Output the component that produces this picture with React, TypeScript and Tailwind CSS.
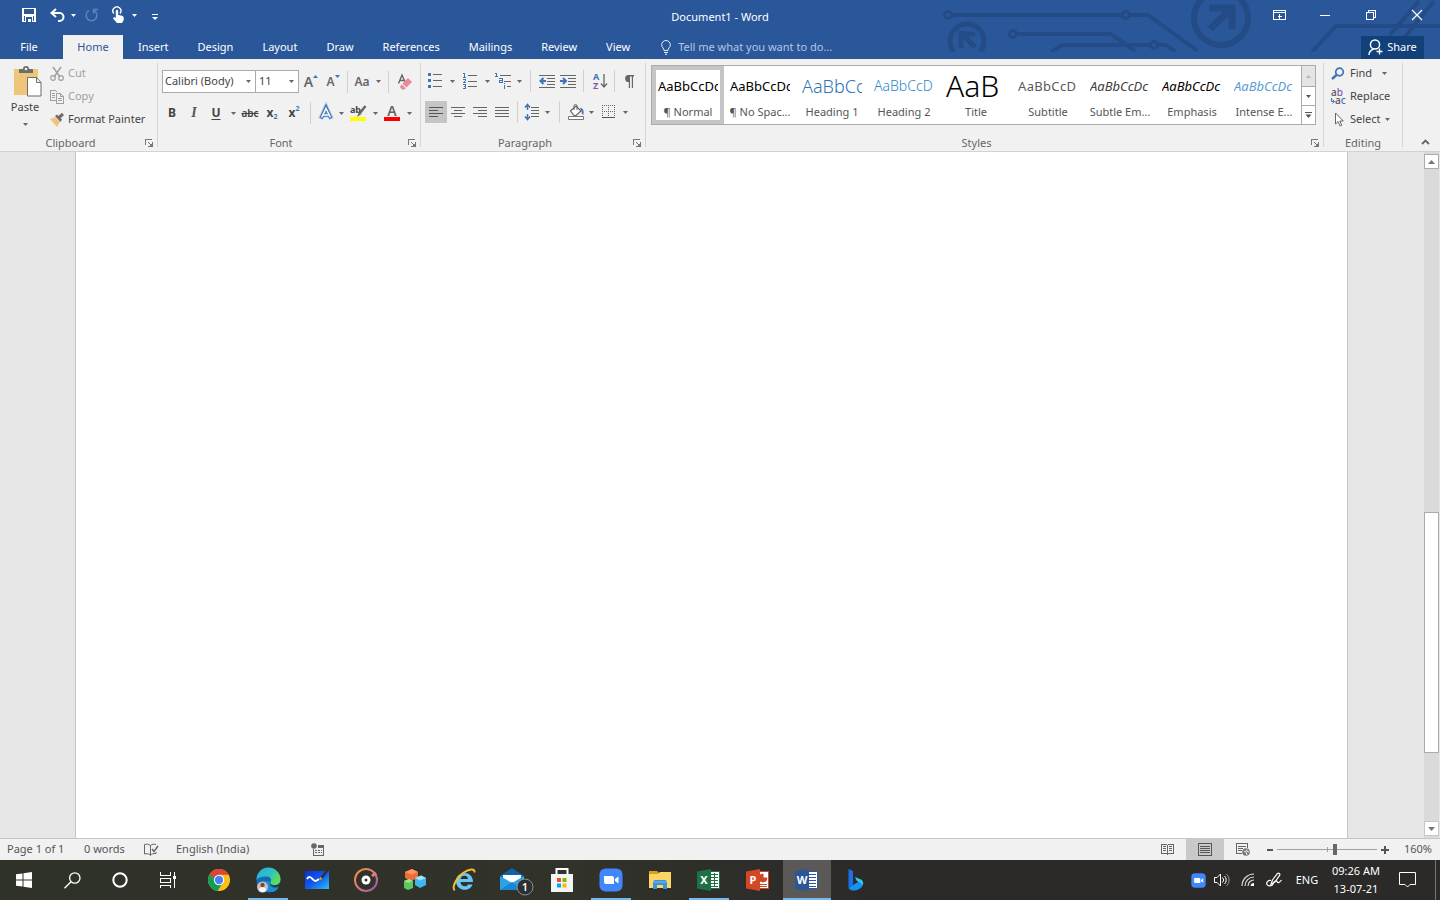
import type { FC, ReactNode } from "react";
import clsx from "clsx";

type IconProps = { w?: number; h?: number; crisp?: boolean; className?: string; children: ReactNode };

const Icon: FC<IconProps> = ({ w = 16, h = 16, crisp, className, children }) => (
  <svg
    width={w}
    height={h}
    viewBox={`0 0 ${w} ${h}`}
    fill="none"
    shapeRendering={crisp ? "crispEdges" : undefined}
    className={clsx("shrink-0 overflow-visible", className)}
    aria-hidden="true"
  >
    {children}
  </svg>
);

const Caret = () => (
  <Icon w={5} h={3}>
    <path d="M0 0h5L2.5 3z" fill="currentColor" />
  </Icon>
);

const Tool: FC<{ label: string; className?: string; children: ReactNode }> = ({ label, className, children }) => (
  <button
    type="button"
    aria-label={label}
    className={clsx("flex h-[22px] shrink-0 items-center justify-center text-[#666]", className ?? "w-[22px]")}
  >
    {children}
  </button>
);

const Sep: FC<{ className?: string }> = ({ className }) => (
  <span className={clsx("h-[22px] w-px shrink-0 bg-[#d0d0d0]", className)} />
);

const Group: FC<{ name: string; className: string; launcher?: boolean; children: ReactNode }> = ({
  name,
  className,
  launcher = true,
  children,
}) => (
  <section aria-label={name} className={clsx("flex flex-col", className)}>
    <div className="h-[76px]">{children}</div>
    <div className="flex h-4 items-center text-[#666]">
      <span className="flex-1 text-center">{name}</span>
      {launcher && (
        <button type="button" aria-label={`${name} settings`} className="flex w-4 justify-center">
          <Icon w={8} h={8} crisp>
            <path d="M0.5 6V0.5H7M3 3l3 3M7.5 3v4.5H3" stroke="#777" />
            <path d="M7 4v3H4z" fill="#777" />
          </Icon>
        </button>
      )}
    </div>
  </section>
);

const Divider = () => <span className="mt-1 h-[84px] w-px shrink-0 bg-[#d4d4d4]" />;

const tabs = ["Insert", "Design", "Layout", "Draw", "References", "Mailings", "Review", "View"];

const styleItems = [
  { name: "¶ Normal", sample: "AaBbCcDc", look: "text-[13px] text-black" },
  { name: "¶ No Spac...", sample: "AaBbCcDc", look: "text-[13px] text-black" },
  { name: "Heading 1", sample: "AaBbCc", look: "text-lg font-light text-[#2e74b5]" },
  { name: "Heading 2", sample: "AaBbCcD", look: "text-sm font-light text-[#2e86c8]" },
  { name: "Title", sample: "AaB", look: "text-[30px] font-light text-black" },
  { name: "Subtitle", sample: "AaBbCcD", look: "text-[13px] tracking-wide text-[#5a5a5a]" },
  { name: "Subtle Em...", sample: "AaBbCcDc", look: "text-[13px] italic text-[#404040]" },
  { name: "Emphasis", sample: "AaBbCcDc", look: "text-[13px] italic text-black" },
  { name: "Intense E...", sample: "AaBbCcDc", look: "text-[13px] italic text-[#5b9bd5]" },
];

const Circuit = () => (
  <svg
    width="500"
    height="52"
    viewBox="0 0 500 52"
    fill="none"
    stroke="#234c87"
    strokeWidth="4"
    className="absolute top-0 right-0"
    aria-hidden="true"
  >
    <circle cx="8" cy="15" r="3.5" strokeWidth="3" />
    <path d="M12 15h170M190 15h18l50 36" />
    <circle cx="186" cy="15" r="3.5" strokeWidth="3" />
    <circle cx="73" cy="34" r="3.5" strokeWidth="3" />
    <path d="M77 34h94l24 17M111 52l11-7h88M218 45h8l10 7" />
    <circle cx="214" cy="45" r="3.5" strokeWidth="3" />
    <path d="M14 52a17 17 0 1 1 26 0" strokeWidth="5" />
    <path d="M19 34h16M21 31v17M22 34l13 13" strokeWidth="5" />
    <circle cx="281" cy="18" r="27" strokeWidth="6" />
    <path d="M269 8h26M292 5v24M292 8l-22 21" strokeWidth="7" />
    <path d="M372 52l24-26h104M450 35l29-34M464 38l30-37" />
  </svg>
);

const TitleBar = () => (
  <div className="relative grid h-[35px] grid-cols-[1fr_auto_1fr] text-white">
    <div className="flex h-[30px] items-center pl-[18px]">
      <button type="button" aria-label="Save" className="flex w-[22px] justify-center">
        <Icon w={14} h={14} crisp>
          <path d="M0 0h14v14H0z" fill="#fff" />
          <path d="M2 1h10v5H2zM2 8h10v5H2z" fill="#2a579a" />
          <path d="M3 8h8v6H3z" fill="#fff" />
          <path d="M4 9h6v5H9v-3H6v3H4z" fill="#2a579a" />
        </Icon>
      </button>
      <button type="button" aria-label="Undo" className="flex w-[31px] items-center justify-center pl-1">
        <Icon w={15} h={14}>
          <path d="M6 1L1.500 5l4.500 4M2 5h7.500a3.700 3.700 0 0 1 0 8H8" stroke="#fff" strokeWidth="2" />
        </Icon>
      </button>
      <Caret />
      <button type="button" aria-label="Repeat" className="flex w-8 justify-center">
        <Icon w={14} h={14}>
          <path d="M9 2.500A5.400 5.400 0 1 1 4 2.500M8.500 5.500V1.500H13" stroke="#5b82bb" strokeWidth="1.500" />
        </Icon>
      </button>
      <button type="button" aria-label="Touch mode" className="flex w-5 justify-center">
        <Icon w={12} h={16}>
          <path d="M1.800 6.500A4 4 0 1 1 8 6.500" stroke="#fff" strokeWidth="1.400" />
          <path d="M3.800 4a1.200 1.200 0 0 1 2.400 0v4l4 .8 1.500 1.200v3L10 16H5L1 11.500 2 10l1.800 1z" fill="#fff" />
        </Icon>
      </button>
      <span className="flex w-3 justify-center">
        <Caret />
      </span>
      <button type="button" aria-label="Customize toolbar" className="mt-1 flex w-[30px] justify-center">
        <Icon w={6} h={6}>
          <path d="M0 .5h6" stroke="#fff" />
          <path d="M0 3h6L3 6z" fill="#fff" />
        </Icon>
      </button>
    </div>
    <h1 className="self-center">Document1 - Word</h1>
    <div className="flex h-[30px] items-center justify-end">
      <button type="button" aria-label="Ribbon display options" className="flex w-[46px] justify-center">
        <Icon w={13} h={10} crisp>
          <path d="M.5 .5h12v9H.5zM0 2.500h13M6.500 4v5M4.500 6h4" stroke="#fff" />
        </Icon>
      </button>
      <button type="button" aria-label="Minimize" className="flex w-[46px] justify-center">
        <Icon w={10} h={10} crisp>
          <path d="M0 5.500h10" stroke="#fff" />
        </Icon>
      </button>
      <button type="button" aria-label="Restore" className="flex w-[46px] justify-center">
        <Icon w={10} h={10} crisp>
          <path d="M.5 2.500h7v7h-7zM2.500 2V.5h7v7H8" stroke="#fff" />
        </Icon>
      </button>
      <button type="button" aria-label="Close" className="flex w-[46px] justify-center">
        <Icon w={10} h={10}>
          <path d="M0 0l10 10M10 0L0 10" stroke="#fff" strokeWidth="1.200" />
        </Icon>
      </button>
    </div>
  </div>
);

const TabRow = () => (
  <nav className="relative flex h-6 items-center text-white">
    <a href="#file" className="w-[58px] text-center">
      File
    </a>
    <a href="#home" className="ml-[5px] flex h-6 w-[60px] items-center justify-center bg-[#f1f1f1] text-[#2a579a]">
      Home
    </a>
    <div className="flex gap-[29px] pr-[31px] pl-[15px]">
      {tabs.map((tab) => (
        <a key={tab} href={`#${tab.toLowerCase()}`}>
          {tab}
        </a>
      ))}
    </div>
    <label className="flex flex-1 items-center gap-[7px]">
      <Icon w={10} h={15}>
        <path d="M3 10.500C3 8 .7 7.500.7 4.800a4.300 4.300 0 0 1 8.600 0C9.300 7.500 7 8 7 10.500zM3 12.500h4M4 14.300h2" stroke="#e8eef7" />
      </Icon>
      <input
        aria-label="Tell me"
        placeholder="Tell me what you want to do..."
        className="w-[200px] bg-transparent outline-none placeholder:text-[#b4c6e2]"
      />
    </label>
    <button type="button" className="mr-4 flex h-[23px] w-[63px] items-center justify-center gap-1 bg-[#124078]">
      <Icon w={15} h={16}>
        <circle cx="7" cy="5.500" r="4.600" stroke="#fff" strokeWidth="1.500" />
        <path d="M1 16c0-3.500 2-5 4.500-6M11.500 9.500v6M8.500 12.500h6" stroke="#fff" strokeWidth="1.400" />
      </Icon>
      Share
    </button>
  </nav>
);

const ClipboardGroup = () => (
  <Group name="Clipboard" className="w-[157px]">
    <div className="flex pt-[3px]">
      <button type="button" className="flex w-[50px] flex-col items-center pt-[3px]">
        <Icon w={30} h={32} className="ml-1">
          <path d="M2 4h24v26H2z" fill="#eec57a" />
          <path d="M7 8V4h4a3 3 0 0 1 6 0h4v4z" fill="#6d6d6d" />
          <circle cx="14" cy="4" r="1.300" fill="#f1f1f1" />
          <path d="M15.500 12.500h9l4.500 5V31H15.500z" fill="#fff" stroke="#6d6d6d" />
          <path d="M24.500 12.500v5H29" stroke="#6d6d6d" />
        </Icon>
        <span className="mt-0.5 leading-4">Paste</span>
        <span className="mt-2 text-[#666]">
          <Caret />
        </span>
      </button>
      <div className="flex flex-col">
        <button type="button" disabled className="flex h-[23px] items-center gap-1 text-[#a0a0a0]">
          <Icon w={14} h={14}>
            <path d="M3 0l7 10M11 0L4 10" stroke="#a0a0a0" strokeWidth="1.500" />
            <circle cx="3" cy="11" r="2.300" stroke="#a0a0a0" strokeWidth="1.200" />
            <circle cx="11" cy="11" r="2.300" stroke="#a0a0a0" strokeWidth="1.200" />
          </Icon>
          Cut
        </button>
        <button type="button" disabled className="flex h-[23px] items-center gap-1 text-[#a0a0a0]">
          <Icon w={14} h={14} crisp>
            <path d="M6 10.500H.5V.5h5l2 2M2 3.500h3M2 5.500h3M2 7.500h3" stroke="#a0a0a0" />
            <path d="M6.500 3.500h4l3 3v7h-7zM10.500 3.500v3h3M8 8.500h4M8 10.500h4" stroke="#a0a0a0" />
          </Icon>
          Copy
        </button>
        <button type="button" className="flex h-[23px] items-center gap-1">
          <Icon w={14} h={14}>
            <path d="M0 6l5-2 5 5-3 5z" fill="#eec57a" />
            <path d="M5 3l2-1.500 5 5L10.500 9z" fill="#6d6d6d" />
            <path d="M9 4.500L13 1" stroke="#6d6d6d" strokeWidth="3" />
          </Icon>
          Format Painter
        </button>
      </div>
    </div>
  </Group>
);

const FontGroup = () => (
  <Group name="Font" className="w-[262px]">
    <div className="flex flex-col gap-[9px] pt-[11px] pl-[3px]">
      <div className="flex items-center">
        <label className="relative ml-px flex items-center text-[#666]">
          <select
            aria-label="Font"
            className="h-[23px] w-[94px] appearance-none border border-[#ababab] bg-white pl-0.5 text-[#444]"
          >
            <option>Calibri (Body)</option>
          </select>
          <span className="pointer-events-none absolute right-[5px]">
            <Caret />
          </span>
        </label>
        <label className="relative -ml-px flex items-center text-[#666]">
          <select
            aria-label="Font size"
            className="h-[23px] w-11 appearance-none border border-[#ababab] bg-white pl-[3px] text-[#444]"
          >
            <option>11</option>
          </select>
          <span className="pointer-events-none absolute right-[5px]">
            <Caret />
          </span>
        </label>
        <Tool label="Grow font" className="ml-px w-[22px]">
          <span className="text-sm font-semibold">A</span>
          <Icon w={5} h={14}>
            <path d="M0 3l2.500-3L5 3z" fill="#3f74b5" />
          </Icon>
        </Tool>
        <Tool label="Shrink font">
          <span className="text-xs font-semibold">A</span>
          <Icon w={5} h={14}>
            <path d="M0 0h5L2.500 3z" fill="#3f74b5" />
          </Icon>
        </Tool>
        <Sep className="mx-[3px]" />
        <Tool label="Change case">
          <span className="text-xs font-semibold">Aa</span>
        </Tool>
        <Tool label="Change case options" className="w-[10px]">
          <Caret />
        </Tool>
        <Sep className="mx-[5px]" />
        <Tool label="Clear formatting">
          <Icon w={16} h={16}>
            <path d="M1.500 9.500L5 1l3.500 8M3 6.500h4.500" stroke="#666" strokeWidth="1.400" />
            <path d="M11 4l4 4-5.500 5.500-4-4z" fill="#e88a99" />
            <path d="M4.800 10.200l4 4L7.500 15.500H5L2.800 13z" fill="#e88a99" />
          </Icon>
        </Tool>
      </div>
      <div className="flex items-center">
        <Tool label="Bold">
          <b className="text-xs text-[#444]">B</b>
        </Tool>
        <Tool label="Italic">
          <i className="font-['Liberation_Serif',serif] text-sm font-bold text-[#555]">I</i>
        </Tool>
        <Tool label="Underline">
          <span className="text-xs font-bold text-[#444] underline underline-offset-2">U</span>
        </Tool>
        <Tool label="Underline options" className="w-3">
          <Caret />
        </Tool>
        <Tool label="Strikethrough">
          <span className="text-[10px] font-semibold text-[#444] line-through">abc</span>
        </Tool>
        <Tool label="Subscript">
          <b className="text-xs text-[#444]">x</b>
          <span className="mt-2 text-[7px] font-bold text-[#3f74b5]">2</span>
        </Tool>
        <Tool label="Superscript">
          <b className="text-xs text-[#444]">x</b>
          <span className="mb-2 text-[7px] font-bold text-[#3f74b5]">2</span>
        </Tool>
        <Sep className="mx-[5px]" />
        <Tool label="Text effects" className="w-5">
          <Icon w={16} h={16}>
            <path d="M2.500 14L8 2l5.500 12M5 10h6" stroke="#9dbde0" strokeWidth="5" strokeOpacity=".5" />
            <path d="M3 13.500L8 2.500l5 11M5 10h6" stroke="#3f74b5" strokeWidth="3.600" />
            <path d="M3.500 12.500L8 3.500l4.500 9M5 10h6" stroke="#fff" strokeWidth="1.500" />
          </Icon>
        </Tool>
        <Tool label="Text effects options" className="w-[10px]">
          <Caret />
        </Tool>
        <Tool label="Highlight" className="w-6">
          <span className="flex flex-col items-center">
            <span className="flex h-3 items-start">
              <span className="text-[9px] leading-[10px] font-bold text-[#444]">ab</span>
              <Icon w={9} h={12} className="-ml-1">
                <path d="M8.500 1L3 8" stroke="#666" strokeWidth="2.500" />
                <path d="M2 7l2.500 2L0 12z" fill="#666" />
              </Icon>
            </span>
            <span className="h-1 w-4 bg-[#ffff00]" />
          </span>
        </Tool>
        <Tool label="Highlight options" className="w-[10px]">
          <Caret />
        </Tool>
        <Tool label="Font color" className="w-6">
          <span className="flex flex-col items-center">
            <span className="h-3 text-sm leading-3 font-semibold">A</span>
            <span className="h-1 w-4 bg-[#ff0000]" />
          </span>
        </Tool>
        <Tool label="Font color options" className="w-[10px]">
          <Caret />
        </Tool>
      </div>
    </div>
  </Group>
);

const ParagraphGroup = () => (
  <Group name="Paragraph" className="w-[224px]">
    <div className="flex flex-col gap-[9px] pt-[11px] pl-[3px]">
      <div className="flex items-center">
        <Tool label="Bullets">
          <Icon w={14} h={16} crisp>
            <path d="M0 0h3v3H0zM0 6h3v3H0zM0 12h3v3H0z" fill="#3f74b5" />
            <path d="M5 1.500h9M5 7.500h9M5 13.500h9" stroke="#666" />
          </Icon>
        </Tool>
        <Tool label="Bullet options" className="w-3">
          <Caret />
        </Tool>
        <Tool label="Numbering" className="w-6">
          <Icon w={14} h={16} crisp>
            <path d="M0 .5h1.500V4M0 4.500h3M0 6.500h2.500v1L.5 9.500H3M0 11.500h2.500v4H0M1 13.500h1" stroke="#3f74b5" />
            <path d="M5 2.500h9M5 8.500h9M5 13.500h9" stroke="#666" />
          </Icon>
        </Tool>
        <Tool label="Numbering options" className="w-[10px]">
          <Caret />
        </Tool>
        <Tool label="Multilevel list">
          <Icon w={16} h={16} crisp>
            <path d="M0 .5h1.500V3M0 3.500h3M4 5.500h3v4M7 7.500H4.500v2H7M9.500 12v4M9.500 10v1" stroke="#3f74b5" />
            <path d="M5 2.500h11M9 8.500h7M12 13.500h4" stroke="#666" />
          </Icon>
        </Tool>
        <Tool label="Multilevel options" className="w-[10px]">
          <Caret />
        </Tool>
        <Sep className="mx-[6px]" />
        <Tool label="Decrease indent" className="w-5">
          <Icon w={16} h={14}>
            <path d="M0 1.500h16M8 4.500h8M8 7.500h8M8 10.500h8M0 13.500h16" stroke="#666" shapeRendering="crispEdges" />
            <path d="M7 7H2M4.500 4L1.500 7l3 3" stroke="#3f74b5" strokeWidth="2" />
          </Icon>
        </Tool>
        <Tool label="Increase indent">
          <Icon w={16} h={14}>
            <path d="M0 1.500h16M8 4.500h8M8 7.500h8M8 10.500h8M0 13.500h16" stroke="#666" shapeRendering="crispEdges" />
            <path d="M0 7h5M3 4l3 3-3 3" stroke="#3f74b5" strokeWidth="2" />
          </Icon>
        </Tool>
        <Sep className="mx-1" />
        <Tool label="Sort" className="w-6">
          <Icon w={15} h={16}>
            <text x="0" y="7" fontSize="9" fontWeight="700" fill="#3f74b5">
              A
            </text>
            <text x="0" y="16" fontSize="9" fontWeight="700" fill="#8659a8">
              Z
            </text>
            <path d="M11 1v13M8 10.500l3 3.500 3-3.500" stroke="#666" strokeWidth="1.300" />
          </Icon>
        </Tool>
        <Sep className="mx-[2px]" />
        <Tool label="Show paragraph marks" className="w-6">
          <Icon w={10} h={13}>
            <path d="M4.500 0H10v1.500H9V13H7.800V1.500H6V13H4.800V7A3.500 3.500 0 0 1 4.500 0z" fill="#666" />
          </Icon>
        </Tool>
      </div>
      <div className="flex items-center pl-px">
        <Tool label="Align left" className="w-[22px] bg-[#c5c5c5]">
          <Icon w={14} h={12} crisp>
            <path d="M0 1.500h14M0 4.500h9M0 7.500h14M0 10.500h9" stroke="#555" />
          </Icon>
        </Tool>
        <Tool label="Center">
          <Icon w={14} h={12} crisp>
            <path d="M0 1.500h14M3 4.500h8M0 7.500h14M3 10.500h8" stroke="#666" />
          </Icon>
        </Tool>
        <Tool label="Align right">
          <Icon w={14} h={12} crisp>
            <path d="M0 1.500h14M5 4.500h9M0 7.500h14M5 10.500h9" stroke="#666" />
          </Icon>
        </Tool>
        <Tool label="Justify">
          <Icon w={14} h={12} crisp>
            <path d="M0 1.500h14M0 4.500h14M0 7.500h14M0 10.500h14" stroke="#666" />
          </Icon>
        </Tool>
        <Sep className="mx-1" />
        <Tool label="Line spacing" className="w-5">
          <Icon w={14} h={16}>
            <path d="M6 3.500h8M6 6.500h8M6 9.500h8M6 12.500h8" stroke="#666" shapeRendering="crispEdges" />
            <path d="M2.500 1v5M2.500 10v5M0 3.500l2.500-3 2.500 3M0 12.500l2.500 3 2.500-3" stroke="#3f74b5" strokeWidth="1.500" />
          </Icon>
        </Tool>
        <Tool label="Line spacing options" className="w-[10px]">
          <Caret />
        </Tool>
        <Sep className="mx-[7px]" />
        <Tool label="Shading" className="w-[18px]">
          <Icon w={17} h={16}>
            <path d="M.5 12.500h15v3H.5z" fill="#fff" stroke="#777" />
            <path d="M2.500 7L8 2l5 5-5 4.500H6z" fill="#fff" stroke="#666" strokeWidth="1.200" />
            <path d="M6 6V2a1.500 1.500 0 0 1 3 0v4" stroke="#666" />
            <path d="M12 4c3 0 4 2 3.500 7-1.500-1-2-2-2-4z" fill="#3f74b5" />
          </Icon>
        </Tool>
        <Tool label="Shading options" className="w-3">
          <Caret />
        </Tool>
        <Tool label="Borders">
          <Icon w={13} h={14} crisp>
            <path d="M0 .5h13M0 6.500h13M.5 0v13M6.500 0v13M12.500 0v13" stroke="#666" strokeDasharray="1 1" />
            <path d="M0 12.500h13" stroke="#555" />
          </Icon>
        </Tool>
        <Tool label="Border options" className="w-3">
          <Caret />
        </Tool>
      </div>
    </div>
  </Group>
);

const StylesGroup = () => (
  <Group name="Styles" className="min-w-0 flex-1">
    <div className="pt-[6px] pr-[7px] pl-[5px]">
      <div className="flex h-[60px] border border-[#ababab] bg-white">
        <div className="flex min-w-0 flex-1 overflow-hidden">
          {styleItems.map((item, index) => (
            <button
              key={item.name}
              type="button"
              className={clsx(
                "flex w-[72px] shrink-0 flex-col items-center border-4 pt-1",
                index === 0 ? "border-[#c5c5c5]" : "border-transparent",
              )}
            >
              <span className="flex h-6 w-[60px] items-center overflow-hidden">
                <span className={clsx("leading-6 whitespace-nowrap", item.look)}>{item.sample}</span>
              </span>
              <span className="mt-1.5 leading-4 whitespace-nowrap text-[#555]">{item.name}</span>
            </button>
          ))}
        </div>
        <div className="flex w-[14px] flex-col border-l border-[#ababab] text-[#555]">
          <button
            type="button"
            aria-label="Previous styles"
            className="flex h-5 items-center justify-center bg-[#e4e4e4] text-[#b5b5b5]"
          >
            <Icon w={5} h={3}>
              <path d="M0 3l2.500-3L5 3z" fill="currentColor" />
            </Icon>
          </button>
          <button
            type="button"
            aria-label="Next styles"
            className="flex flex-1 items-center justify-center border-y border-[#ababab]"
          >
            <Caret />
          </button>
          <button type="button" aria-label="More styles" className="flex flex-1 items-center justify-center">
            <Icon w={7} h={6}>
              <path d="M0 .5h7" stroke="#555" />
              <path d="M.5 2.500h6l-3 3.500z" fill="#555" />
            </Icon>
          </button>
        </div>
      </div>
    </div>
  </Group>
);

const EditingGroup = () => (
  <Group name="Editing" className="w-[78px]" launcher={false}>
    <div className="flex flex-col items-start pt-[3px] pl-[6px]">
      <button type="button" className="flex h-[23px] items-center gap-1">
        <Icon w={16} h={14}>
          <circle cx="9.500" cy="5" r="3.800" stroke="#3f74b5" strokeWidth="1.700" />
          <path d="M6.500 8L2 12" stroke="#3f74b5" strokeWidth="2.500" />
        </Icon>
        Find
        <span className="ml-1.5 text-[#666]">
          <Caret />
        </span>
      </button>
      <button type="button" className="flex h-[23px] items-center gap-1">
        <Icon w={16} h={16}>
          <text x="1" y="7" fontSize="10" fontWeight="500" fill="#555">
            a<tspan fill="#8659a8">b</tspan>
          </text>
          <text x="5" y="15" fontSize="10" fontWeight="500" fill="#555">
            a<tspan fill="#3f74b5">c</tspan>
          </text>
          <path d="M1.500 9v3.500H4M2.500 10.500l2 2-2 2" stroke="#3f74b5" />
        </Icon>
        Replace
      </button>
      <button type="button" className="flex h-[23px] items-center gap-1">
        <Icon w={16} h={16}>
          <path d="M5.500 1v11l2.600-2.500 2 4.500 1.700-.8-2-4.200h3.500z" fill="#fff" stroke="#666" />
        </Icon>
        Select
        <span className="text-[#666]">
          <Caret />
        </span>
      </button>
    </div>
  </Group>
);

const Ribbon = () => (
  <div className="flex h-[93px] border-b border-[#d2d2d2] bg-[#f1f1f1] text-[#444]">
    <ClipboardGroup />
    <Divider />
    <FontGroup />
    <Divider />
    <ParagraphGroup />
    <Divider />
    <StylesGroup />
    <Divider />
    <EditingGroup />
    <Divider />
    <div className="flex w-[37px] items-end justify-center pb-[6px] pl-2">
      <button type="button" aria-label="Collapse ribbon">
        <Icon w={9} h={6}>
          <path d="M1 5l3.500-3.500L8 5" stroke="#666" strokeWidth="1.800" />
        </Icon>
      </button>
    </div>
  </div>
);

const Workspace = () => (
  <main className="flex min-h-0 flex-1 bg-[#e6e6e6]">
    <div className="mr-[76px] ml-[75px] flex-1 border-x border-[#c6c6c6] bg-white" />
    <div className="mr-px flex w-[15px] flex-col bg-[#dadada] py-0.5 text-[#777]">
      <button
        type="button"
        aria-label="Scroll up"
        className="flex h-[15px] items-center justify-center border border-[#ababab] bg-white"
      >
        <Icon w={7} h={4}>
          <path d="M0 4l3.500-4L7 4z" fill="currentColor" />
        </Icon>
      </button>
      <div className="flex-[344]" />
      <div className="flex-[240] border border-[#ababab] bg-white" />
      <div className="flex-[68]" />
      <button
        type="button"
        aria-label="Scroll down"
        className="flex h-[15px] items-center justify-center border border-[#c6c6c6] bg-white"
      >
        <Icon w={7} h={4}>
          <path d="M0 0h7L3.500 4z" fill="currentColor" />
        </Icon>
      </button>
    </div>
  </main>
);

const StatusBar = () => (
  <div className="flex h-[22px] items-center border-t border-[#c6c6c6] bg-[#f1f1f1] text-[#555]">
    <span className="w-[84px] pl-[7px]">Page 1 of 1</span>
    <span className="w-[59px]">0 words</span>
    <button type="button" aria-label="Proofing" className="w-[33px]">
      <Icon w={16} h={14}>
        <path d="M7.500 2.500C5.500 1 3 1 1.500 1.500v9.500c2-.5 4-.5 6 1 1-1 2.500-1.500 5.500-1.500V9M7.500 2v10.500M7.500 2.500C9 1 11 1 13 1.500" stroke="#666" />
        <path d="M9 6l2 2.500L15 3" stroke="#666" strokeWidth="1.400" />
      </Icon>
    </button>
    <span className="w-[135px]">English (India)</span>
    <button type="button" aria-label="Record macro">
      <Icon w={14} h={14} crisp>
        <path d="M2.500 6v6.500h10v-10H7" stroke="#666" />
        <path d="M7 2h6v3H7z" fill="#666" />
        <path d="M4 7.500h7M4 9.500h7" stroke="#666" strokeDasharray="2 1" />
        <circle cx="3" cy="3" r="2.800" fill="#666" shapeRendering="auto" />
      </Icon>
    </button>
    <div className="ml-auto flex items-center">
      <button type="button" aria-label="Read mode" className="flex h-[21px] w-[38px] items-center justify-center">
        <Icon w={13} h={13} crisp>
          <path d="M.5 1.500h5l1 1 1-1h5v9h-5l-1 1-1-1h-5zM6.500 2v10M2 3.500h3M2 5.500h3M2 7.500h3M8 3.500h3M8 5.500h3M8 7.500h3" stroke="#666" />
        </Icon>
      </button>
      <button
        type="button"
        aria-label="Print layout"
        className="flex h-[21px] w-[38px] items-center justify-center bg-[#c9c9c9]"
      >
        <Icon w={14} h={13} crisp>
          <path d="M.5 .5h13v12H.5zM2 3.500h10M2 5.500h10M2 7.500h10M2 9.500h10" stroke="#555" />
        </Icon>
      </button>
      <button type="button" aria-label="Web layout" className="flex h-[21px] w-[38px] items-center justify-center">
        <Icon w={14} h={13}>
          <path d="M6 10.500H.5V.5h11V5M2 3.500h8M2 5.500h5M2 7.500h4" stroke="#666" shapeRendering="crispEdges" />
          <circle cx="10" cy="9" r="3.800" fill="#777" />
          <path d="M8 8l2 1 1 3M11 6.500l-.5 1.500L13 9" stroke="#f1f1f1" />
        </Icon>
      </button>
      <button type="button" aria-label="Zoom out" className="flex w-[15px] justify-center">
        <Icon w={6} h={8} crisp>
          <path d="M0 4h6" stroke="#555" strokeWidth="2" />
        </Icon>
      </button>
      <span className="relative flex items-center">
        <span className="absolute left-[50px] h-[5px] w-px bg-[#a0a0a0]" />
        <input
          type="range"
          aria-label="Zoom"
          defaultValue={58}
          className="relative h-[11px] w-[100px] appearance-none bg-[linear-gradient(#a0a0a0,#a0a0a0)] bg-[length:100%_1px] bg-center bg-no-repeat [&::-webkit-slider-thumb]:h-[11px] [&::-webkit-slider-thumb]:w-1 [&::-webkit-slider-thumb]:appearance-none [&::-webkit-slider-thumb]:bg-[#666]"
        />
      </span>
      <button type="button" aria-label="Zoom in" className="flex w-4 justify-center">
        <Icon w={8} h={8} crisp>
          <path d="M0 4h8M4 0v8" stroke="#555" strokeWidth="2" />
        </Icon>
      </button>
      <span className="w-[47px] pr-2 text-right">160%</span>
    </div>
  </div>
);

const ZoomGlyph: FC<{ size: number }> = ({ size }) => (
  <svg width={size} height={size} viewBox="0 0 24 24" aria-hidden="true">
    <rect x=".5" y=".5" width="23" height="23" rx="6" fill="#4087fc" />
    <path d="M5 8h8a2 2 0 0 1 2 2v6H7a2 2 0 0 1-2-2zM16 11l3.500-2.500v7L16 13z" fill="#fff" />
  </svg>
);

// Shared base of the three Office taskbar icons
const OfficeGlyph: FC<{ color: string; letter: string; children: ReactNode }> = ({ color, letter, children }) => (
  <Icon w={24} h={22}>
    <path d="M12 2.500h10.500v17H12z" fill="#fff" stroke={color} />
    {children}
    <path d="M0 2.500L14 0v22L0 19.500z" fill={color} />
    <text x="7" y="15" textAnchor="middle" fontSize="11" fontWeight="700" fill="#fff">
      {letter}
    </text>
  </Icon>
);

const apps: { name: string; state?: "open" | "active"; icon: ReactNode }[] = [
  {
    name: "Chrome",
    icon: (
      <Icon w={24} h={24}>
        <circle cx="12" cy="12" r="11" fill="#fbc117" />
        <path d="M12 12L2.500 6.500A11 11 0 0 1 21.500 6.500H12z" fill="#db4437" />
        <path d="M2.500 6.500a11 11 0 0 0 8 16.400L16 14.500 8 15z" fill="#0f9d58" />
        <path d="M2.500 6.500L7.500 15 12 7z" fill="#0f9d58" />
        <path d="M2.500 6.500A11 11 0 0 1 21.500 6.500H12l-4 4z" fill="#db4437" />
        <circle cx="12" cy="12" r="5.200" fill="#fff" />
        <circle cx="12" cy="12" r="4.200" fill="#4285f4" />
      </Icon>
    ),
  },
  {
    name: "Edge",
    state: "open",
    icon: (
      <Icon w={25} h={25}>
        <defs>
          <linearGradient id="edgeTop" x1="0" y1="0" x2="1" y2=".6">
            <stop stopColor="#2aa9e8" />
            <stop offset=".6" stopColor="#30c3c0" />
            <stop offset="1" stopColor="#63dd52" />
          </linearGradient>
        </defs>
        <circle cx="12.500" cy="12.500" r="12" fill="#1368b8" />
        <path d="M.5 12A12 12 0 0 1 24.500 11c0 4-3 6-6 6-3.500 0-5-1.500-4-3 2-3-1-6-5-5.500C5 8.500 2 10 .5 12z" fill="url(#edgeTop)" />
        <path d="M14.500 13.500c-1 2 1 4 4.500 4 2 0 3.500-.5 5-2l.5 3h-3c-4 1.500-8-1-7-5z" fill="#2f312b" />
        <path d="M7 13c-2 6 2 11 8 11 4 0 6-2 7.500-4.500-6 1.500-10-1.500-8.500-6z" fill="#1a8fd6" />
        <circle cx="6.500" cy="19" r="5.500" fill="#c9c1b8" />
        <path d="M3 23c0-3 1.500-4 3.500-4s3.500 1 3.500 4c-2 1.500-5 1.500-7 0z" fill="#f7f7f7" />
        <circle cx="6.500" cy="17" r="2.200" fill="#7c4a37" />
      </Icon>
    ),
  },
  {
    name: "Whiteboard",
    icon: (
      <Icon w={24} h={18}>
        <defs>
          <linearGradient id="board" x1="0" y1="0" x2="1" y2="1">
            <stop stopColor="#0b2fd8" />
            <stop offset=".5" stopColor="#1158f0" />
            <stop offset="1" stopColor="#2fc2ee" />
          </linearGradient>
        </defs>
        <path d="M0 0h24v18H0z" fill="url(#board)" />
        <path d="M2 8c2-3 4-2 5.500 0s3 3 6.500 0" stroke="#fff" strokeWidth="2" />
        <path d="M14 8l6-8h3.500L17 8.500z" fill="#2a3246" />
        <path d="M14 8l1.500-2 2 1.500L16 9z" fill="#c9a14a" />
      </Icon>
    ),
  },
  {
    name: "Groove",
    icon: (
      <Icon w={24} h={24}>
        <defs>
          <linearGradient id="groove" x1="0" y1="0" x2="1" y2="1">
            <stop stopColor="#f59043" />
            <stop offset=".5" stopColor="#d9787a" />
            <stop offset="1" stopColor="#9256b5" />
          </linearGradient>
        </defs>
        <circle cx="12" cy="12" r="11" stroke="url(#groove)" strokeWidth="2" />
        <path d="M18 8l4-3" stroke="#e08068" strokeWidth="3" />
        <circle cx="12" cy="12" r="4.500" fill="#fff" />
        <circle cx="12" cy="12" r="1.500" fill="#333" />
      </Icon>
    ),
  },
  {
    name: "Blocks",
    icon: (
      <Icon w={24} h={24}>
        <path d="M2 4l7-3 6 3v6l-7 3-6-3z" fill="#f26a35" />
        <path d="M2 4l7-3 6 3-7 2.500z" fill="#ff9663" />
        <path d="M1 13l5-2 4 2v7l-5 2-4-2z" fill="#5cc75c" />
        <path d="M1 13l5-2 4 2-5 2z" fill="#9be58e" />
        <path d="M12 10l6-2.500 5 2.500v7l-6 3-5-3z" fill="#41b5ec" />
        <path d="M12 10l6-2.500 5 2.500-6 2.500z" fill="#a5e1fb" />
      </Icon>
    ),
  },
  {
    name: "Internet Explorer",
    icon: (
      <Icon w={24} h={24}>
        <path d="M21 14H8.500c0 5 6.500 5.500 7.500 2.500h4.500C18 24.500 4 23.500 4 13 4 3 21 1.500 21 14z" fill="#68c6f4" />
        <path d="M8.500 11H16c0-4.500-7-4.500-7.500 0z" fill="#2c2e29" />
        <path d="M3 22C-1 21 4 10 11 5c6-4 12-5 11.500-.5" stroke="#f3bd2f" strokeWidth="2" />
      </Icon>
    ),
  },
  {
    name: "Mail",
    icon: (
      <Icon w={34} h={28} className="mt-1 -mr-2">
        <path d="M0 8l12-8 12 8v14H0z" fill="#0f63ae" />
        <path d="M3 7h18v8H3z" fill="#fff" />
        <path d="M0 8l12 7 12-7v14H0z" fill="#2ba4e6" />
        <path d="M2 7h20l-10 7z" fill="#fff" />
        <path d="M0 22l12-8 12 8z" fill="#1b86d4" />
        <circle cx="25" cy="19" r="8" fill="#2c3133" stroke="#8c8f90" />
        <text x="25" y="23" textAnchor="middle" fontSize="11" fontWeight="600" fill="#fff">
          1
        </text>
      </Icon>
    ),
  },
  {
    name: "Store",
    icon: (
      <Icon w={24} h={24}>
        <path d="M6.500 7V1h11v6" stroke="#fff" strokeWidth="2" />
        <path d="M1 6h22v18H1z" fill="#f4f4f4" />
        <path d="M7 10h4v4H7z" fill="#f25022" />
        <path d="M12.500 10h4v4h-4z" fill="#7fba00" />
        <path d="M7 15.500h4v4H7z" fill="#00a4ef" />
        <path d="M12.500 15.500h4v4h-4z" fill="#ffb900" />
      </Icon>
    ),
  },
  { name: "Zoom", state: "open", icon: <ZoomGlyph size={24} /> },
  {
    name: "File Explorer",
    icon: (
      <Icon w={22} h={20}>
        <path d="M0 1h8l2 2h11v6H0z" fill="#e09e1b" />
        <path d="M0 4h9l2-2h11v16H0z" fill="#fbd667" />
        <path d="M4 19v-7.500l1.500-1.500h11l1.500 1.500V19h-4v-4H8v4z" fill="#3c92dc" />
        <path d="M4 12h14" stroke="#7abcf0" />
      </Icon>
    ),
  },
  {
    name: "Excel",
    state: "open",
    icon: (
      <OfficeGlyph color="#1e7145" letter="X">
        <path d="M14 5.500h7M14 8.500h7M14 11.500h7M14 14.500h7M14 17.500h7M17.500 4v14" stroke="#1e7145" />
      </OfficeGlyph>
    ),
  },
  {
    name: "PowerPoint",
    icon: (
      <OfficeGlyph color="#d24726" letter="P">
        <path d="M17 5v4h4a4 4 0 1 1-4-4zM14 15.500h7M14 17.500h7" stroke="#d24726" fill="#d24726" />
      </OfficeGlyph>
    ),
  },
  {
    name: "Word",
    state: "active",
    icon: (
      <OfficeGlyph color="#2b579a" letter="W">
        <path d="M14 5.500h7M14 8.500h7M14 11.500h7M14 14.500h7M14 17.500h7" stroke="#2b579a" />
      </OfficeGlyph>
    ),
  },
  {
    name: "Bing",
    icon: (
      <Icon w={16} h={22}>
        <path d="M.5 0L5 2v14l-4.500 3z" fill="#1b6fe8" />
        <path d="M.5 19L5 16l5-3 5 2.500c-1 4-6 6-10 6-2 0-3.500-1-4.500-2.500z" fill="#1492f5" />
        <path d="M7 8l6 2.500c2 1 2.500 3.500 2 5.500l-4.500-3-2-1.500z" fill="#33c8f4" />
      </Icon>
    ),
  },
];

const Taskbar = () => (
  <div className="flex h-10 items-center bg-linear-to-r from-[#2f3229] via-[#31322a] via-40% to-[#2b2a29] to-60% text-[11px] text-white">
    <button type="button" aria-label="Start" className="flex w-12 justify-center">
      <Icon w={16} h={16}>
        <path d="M0 2.300L6.500 1.400v6.100H0zM7.500 1.200L16 0v7.500H7.500zM0 8.500h6.500v6.100L0 13.700zM7.500 8.500H16V16l-8.500-1.200z" fill="#fff" />
      </Icon>
    </button>
    <button type="button" aria-label="Search" className="flex w-12 justify-center">
      <Icon w={17} h={17}>
        <circle cx="10.800" cy="6" r="5.200" stroke="#fff" strokeWidth="1.300" />
        <path d="M7 9.800L.5 16.300" stroke="#fff" strokeWidth="1.400" />
      </Icon>
    </button>
    <button type="button" aria-label="Cortana" className="flex w-12 justify-center">
      <Icon w={16} h={16}>
        <circle cx="8" cy="8" r="6.700" stroke="#fff" strokeWidth="2" />
      </Icon>
    </button>
    <button type="button" aria-label="Task view" className="mr-[3px] flex w-12 justify-center">
      <Icon w={17} h={16} crisp>
        <path d="M.5 0v3.500h10V0M.5 6.500h10v4H.5zM.5 16v-2.500h10V16M14.500 0v16" stroke="#fff" />
        <path d="M13 4h3v3h-3z" fill="#fff" />
      </Icon>
    </button>
    <div className="flex gap-px">
      {apps.map((app) => (
        <button
          key={app.name}
          type="button"
          aria-label={app.name}
          className={clsx("flex h-10 w-12 flex-col items-center", app.state === "active" && "bg-[#5a5958]")}
        >
          <span className="flex h-[38px] items-center justify-center pt-0.5">{app.icon}</span>
          {app.state && <span className={clsx("h-0.5 bg-[#76b9ed]", app.state === "active" ? "w-12" : "w-10")} />}
        </button>
      ))}
    </div>
    <div className="ml-auto flex h-10 items-center">
      <button type="button" aria-label="Zoom meeting" className="flex w-[22px] justify-center">
        <ZoomGlyph size={15} />
      </button>
      <button type="button" aria-label="Volume" className="flex w-[26px] justify-center">
        <Icon w={16} h={14}>
          <path d="M.5 4.500H3l3.500-3.500v12L3 9.500H.5zM8.500 4.500a3.500 3.500 0 0 1 0 5M10.500 3a5.500 5.500 0 0 1 0 8" stroke="#fff" />
          <path d="M12.500 1a8 8 0 0 1 0 12" stroke="#999" />
        </Icon>
      </button>
      <button type="button" aria-label="Network" className="flex w-[26px] justify-center">
        <Icon w={14} h={14}>
          <path d="M1 13A12 12 0 0 1 13 1M4 13a9 9 0 0 1 9-9M7 13a6 6 0 0 1 6-6" stroke="#ddd" strokeWidth="1.200" />
          <path d="M9.500 13a3.500 3.500 0 0 1 3.500-3v3z" fill="#fff" />
        </Icon>
      </button>
      <button type="button" aria-label="Pen" className="flex w-[26px] justify-center">
        <Icon w={17} h={16}>
          <path d="M5 12L6.500 8 11.500 1.500c1-1 3 .3 2.200 1.700L9 10zM5 8.500c-3-.5-5 2-4 4s5 2 6-.5c1.500-4 4-3.500 4.500-2s2 .5 4-2" stroke="#fff" strokeWidth="1.200" />
        </Icon>
      </button>
      <span className="w-10 text-center">ENG</span>
      <button type="button" className="w-[58px] text-center leading-[18px]">
        <span className="block">09:26 AM</span>
        <span className="block">13-07-21</span>
      </button>
      <button type="button" aria-label="Notifications" className="flex w-11 justify-center">
        <Icon w={17} h={16}>
          <path d="M.5 .5h16v12h-5.500l-2.500 2.500L6 12.500H.5z" stroke="#fff" />
        </Icon>
      </button>
      <span className="mr-1 ml-[6px] h-10 w-px bg-[#777]" />
    </div>
  </div>
);

const App = () => (
  <div className="flex h-screen w-full flex-col overflow-hidden font-['Noto_Sans','Open_Sans',sans-serif] text-[11px]">
    <header className="relative bg-[#2a579a]">
      <Circuit />
      <TitleBar />
      <TabRow />
    </header>
    <Ribbon />
    <Workspace />
    <StatusBar />
    <Taskbar />
  </div>
);

export default App;
